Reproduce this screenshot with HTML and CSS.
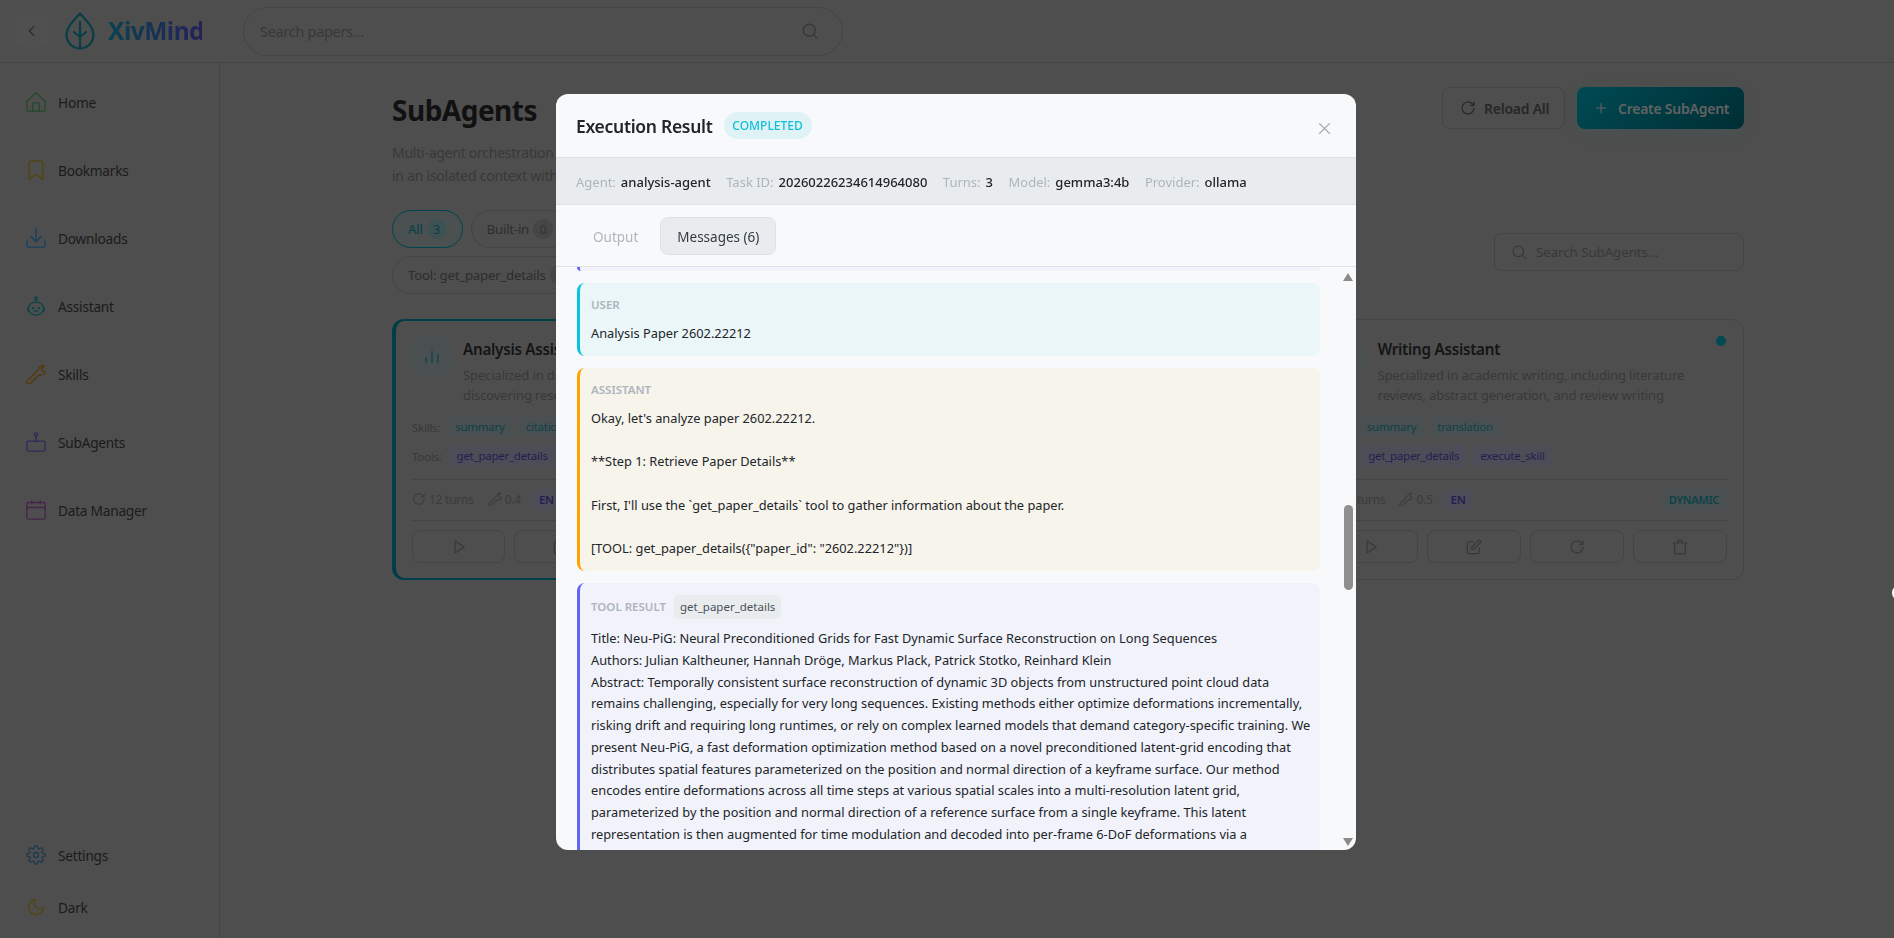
FILE: index.html
```html
<!DOCTYPE html>
<html lang="en">
<head>
<meta charset="utf-8">
<title>XivMind - SubAgents</title>
<link rel="stylesheet" href="styles.css">
</head>
<body>
<div class="app">
  <header class="topbar">
    <button class="back" aria-label="Back"><svg viewBox="0 0 24 24" class="ico-16"><path d="M15 5l-7 7 7 7"/></svg></button>
    <svg class="leaf" viewBox="0 0 30 38"><path d="M15 1.5C8 9 1.6 15.500 1.600 23a13.400 13.400 0 0 0 26.800 0C28.400 15.500 22 9 15 1.500z"/><path d="M15 36V10M15 25l-6-5M15 25l6-5"/></svg>
    <span class="brand">XivMind</span>
    <div class="topsearch">
      <input class="topsearch-input" placeholder="Search papers...">
      <svg viewBox="0 0 24 24" class="ico-18 search-ico"><circle cx="11" cy="11" r="8"/><path d="M17 17l4.500 4.500"/></svg>
    </div>
  </header>
  <div class="shell">
    <aside class="sidebar">
      <nav class="nav">
        <a class="nav-item"><svg viewBox="0 0 24 24" class="nav-ico c-green"><path d="M1 11L12 1l11 10v10.500a1.500 1.500 0 0 1-1.500 1.500h-19A1.500 1.500 0 0 1 1 21.500z"/><path d="M8 23v-9a1 1 0 0 1 1-1h6a1 1 0 0 1 1 1v9"/></svg>Home</a>
        <a class="nav-item"><svg viewBox="0 0 24 24" class="nav-ico c-yellow"><path d="M4 3a2 2 0 0 1 2-2h12a2 2 0 0 1 2 2v20l-8-6-8 6z"/></svg>Bookmarks</a>
        <a class="nav-item"><svg viewBox="0 0 24 24" class="nav-ico c-blue"><path d="M12 1v15M5.500 10l6.500 6.500 6.500-6.500M1 15v6a2 2 0 0 0 2 2h18a2 2 0 0 0 2-2v-6"/></svg>Downloads</a>
        <a class="nav-item"><svg viewBox="0 0 24 24" class="nav-ico c-teal"><circle cx="12" cy="3" r="1.800"/><path d="M12 5v3"/><ellipse cx="12" cy="15" rx="9" ry="8"/><path d="M3 13.500a2.500 3 0 0 0 0 5M21 13.500a2.500 3 0 0 1 0 5"/><circle cx="8.500" cy="14.500" r=".8"/><circle cx="15.500" cy="14.500" r=".8"/><path d="M10 18h4"/></svg>Assistant</a>
        <a class="nav-item"><svg viewBox="0 0 24 24" class="nav-ico c-orange"><path d="M15 7a5.500 5.500 0 0 1 7-5l-3.500 3.500 1.500 3 3 1L23 10a5.500 5.500 0 0 1-7 3L5 23.500a2.500 2.500 0 0 1-3.500-3.500L12 10a5.500 5.500 0 0 1 3-3z"/></svg>Skills</a>
        <a class="nav-item"><svg viewBox="0 0 24 24" class="nav-ico c-indigo"><circle cx="12" cy="3" r="2"/><path d="M12 5v6"/><rect x="1" y="11" width="22" height="12" rx="2.500"/></svg>SubAgents</a>
        <a class="nav-item"><svg viewBox="0 0 24 24" class="nav-ico c-purple"><rect x="1" y="3" width="22" height="20" rx="2"/><path d="M1 9h22M7 1v4M17 1v4"/></svg>Data Manager</a>
      </nav>
      <div class="nav-bottom">
        <a class="nav-item nav-item-low"><svg viewBox="0 0 24 24" class="nav-ico c-steel"><circle cx="12" cy="12" r="3"/><path d="M19.400 15a1.700 1.700 0 0 0 .3 1.800l.1.100a2 2 0 1 1-2.900 2.900l-.1-.1a1.700 1.700 0 0 0-2.800 1.200V21a2 2 0 1 1-4 0v-.1a1.700 1.700 0 0 0-2.900-1.100l-.1.100a2 2 0 1 1-2.800-2.900l.1-.1A1.700 1.700 0 0 0 3.100 14H3a2 2 0 1 1 0-4h.1a1.700 1.700 0 0 0 1.100-2.900l-.1-.1A2 2 0 1 1 7 4.200l.1.100a1.700 1.700 0 0 0 1.800.3 1.700 1.700 0 0 0 1-1.500V3a2 2 0 1 1 4 0v.1a1.700 1.700 0 0 0 2.900 1.100l.1-.1A2 2 0 1 1 19.800 7l-.1.100a1.700 1.700 0 0 0 1.200 2.900h.1a2 2 0 1 1 0 4h-.1a1.700 1.700 0 0 0-1.500 1z"/></svg>Settings</a>
        <a class="nav-item nav-item-low"><svg viewBox="0 0 24 24" class="nav-ico c-yellow"><path d="M21 12.800A9 9 0 1 1 11.200 3 7 7 0 0 0 21 12.800z"/></svg>Dark</a>
      </div>
    </aside>
    <main class="main">
      <section class="page">
        <div class="page-head">
          <div>
            <h1 class="page-title">SubAgents</h1>
            <p class="page-sub">Multi-agent orchestration lets each specialist work on a delegated task<br>in an isolated context with its own tools and skills.</p>
          </div>
          <div class="page-actions">
            <button class="btn btn-ghost"><svg viewBox="0 0 24 24" class="ico-16"><path d="M21 12a9 9 0 1 1-2.600-6.400L21 8M21 3v5h-5"/></svg>Reload All</button>
            <button class="btn btn-primary"><svg viewBox="0 0 24 24" class="ico-14"><path d="M12 4v16M4 12h16"/></svg>Create SubAgent</button>
          </div>
        </div>
        <div class="filters">
          <div class="chips">
            <span class="chip chip-on">All <b class="count count-on">3</b></span>
            <span class="chip">Built-in <b class="count">0</b></span>
            <span class="chip">Dynamic <b class="count">3</b></span>
            <span class="chip">Skill: summary <b class="count">2</b></span>
            <span class="chip">Skill: translation <b class="count">1</b></span>
            <span class="chip">Skill: citation <b class="count">1</b></span>
            <span class="chip chip-break">Tool: get_paper_details <b class="count">3</b></span>
          </div>
          <div class="agent-search">
            <svg viewBox="0 0 24 24" class="ico-16"><circle cx="11" cy="11" r="8"/><path d="M17 17l4.500 4.500"/></svg>
            <input class="agent-search-input" placeholder="Search SubAgents...">
          </div>
        </div>
        <div class="cards">
          <article class="card card-active">
            <div class="card-head">
              <div class="card-icon"><svg viewBox="0 0 24 24" class="ico-20"><path d="M5 13v6M12 5v14M19 9v10"/></svg></div>
              <div class="card-text">
                <h3 class="card-title">Analysis Assistant</h3>
                <p class="card-desc">Specialized in deep analysis of papers and<br>discovering research gaps</p>
              </div>
            </div>
            <div class="tag-row tag-row-skill"><span class="tag-label">Skills:</span><span class="tag tag-skill">summary</span><span class="tag tag-skill">citation</span></div>
            <div class="tag-row"><span class="tag-label">Tools:</span><span class="tag tag-tool">get_paper_details</span><span class="tag tag-tool">execute_skill</span></div>
            <div class="card-meta">
              <svg viewBox="0 0 24 24" class="ico-14"><path d="M21 12a9 9 0 1 1-2.600-6.400L21 8M21 3v5h-5"/></svg><span>12 turns</span>
              <svg viewBox="0 0 24 24" class="ico-14 meta-gap"><path d="M15 7a5.500 5.500 0 0 1 7-5l-3.500 3.500 1.500 3 3 1L23 10a5.500 5.500 0 0 1-7 3L5 23.500a2.500 2.500 0 0 1-3.500-3.500L12 10a5.500 5.500 0 0 1 3-3z"/></svg><span>0.4</span>
              <span class="lang">EN</span>
              <span class="kind">DYNAMIC</span>
            </div>
            <div class="card-btns">
              <button class="icon-btn"><svg viewBox="0 0 24 24" class="ico-16"><path d="M6 3l14 9-14 9z"/></svg></button>
              <button class="icon-btn"><svg viewBox="0 0 24 24" class="ico-16"><path d="M11 4H4a2 2 0 0 0-2 2v14a2 2 0 0 0 2 2h14a2 2 0 0 0 2-2v-7"/><path d="M18.500 2.500a2.100 2.100 0 0 1 3 3L12 15l-4 1 1-4z"/></svg></button>
              <button class="icon-btn"><svg viewBox="0 0 24 24" class="ico-16"><path d="M21 12a9 9 0 1 1-2.600-6.400L21 8M21 3v5h-5"/></svg></button>
              <button class="icon-btn"><svg viewBox="0 0 24 24" class="ico-16"><path d="M4 6h16v16H4zM9 6V2h6v4M2 6h20"/></svg></button>
            </div>
          </article>
          <article class="card">
            <div class="card-head">
              <div class="card-icon"><svg viewBox="0 0 24 24" class="ico-20"><circle cx="11" cy="11" r="8"/><path d="M17 17l4.500 4.500"/></svg></div>
              <div class="card-text">
                <h3 class="card-title">Research Assistant</h3>
                <p class="card-desc">Specialized in literature search, paper discovery, and<br>collecting related research</p>
              </div>
            </div>
            <div class="tag-row tag-row-skill"><span class="tag-label">Skills:</span><span class="tag tag-skill">summary</span></div>
            <div class="tag-row"><span class="tag-label">Tools:</span><span class="tag tag-tool">get_paper_details</span></div>
            <div class="card-meta">
              <svg viewBox="0 0 24 24" class="ico-14"><path d="M21 12a9 9 0 1 1-2.600-6.400L21 8M21 3v5h-5"/></svg><span>10 turns</span>
              <span class="lang">EN</span>
              <span class="kind">DYNAMIC</span>
            </div>
            <div class="card-btns">
              <button class="icon-btn"><svg viewBox="0 0 24 24" class="ico-16"><path d="M6 3l14 9-14 9z"/></svg></button>
              <button class="icon-btn"><svg viewBox="0 0 24 24" class="ico-16"><path d="M11 4H4a2 2 0 0 0-2 2v14a2 2 0 0 0 2 2h14a2 2 0 0 0 2-2v-7"/><path d="M18.500 2.500a2.100 2.100 0 0 1 3 3L12 15l-4 1 1-4z"/></svg></button>
              <button class="icon-btn"><svg viewBox="0 0 24 24" class="ico-16"><path d="M21 12a9 9 0 1 1-2.600-6.400L21 8M21 3v5h-5"/></svg></button>
              <button class="icon-btn"><svg viewBox="0 0 24 24" class="ico-16"><path d="M4 6h16v16H4zM9 6V2h6v4M2 6h20"/></svg></button>
            </div>
          </article>
          <article class="card">
            <span class="status-dot"></span>
            <div class="card-head">
              <div class="card-icon"><svg viewBox="0 0 24 24" class="ico-20"><path d="M11 4H4a2 2 0 0 0-2 2v14a2 2 0 0 0 2 2h14a2 2 0 0 0 2-2v-7"/></svg></div>
              <div class="card-text">
                <h3 class="card-title">Writing Assistant</h3>
                <p class="card-desc">Specialized in academic writing, including literature<br>reviews, abstract generation, and review writing</p>
              </div>
            </div>
            <div class="tag-row tag-row-skill"><span class="tag-label">Skills:</span><span class="tag tag-skill">summary</span><span class="tag tag-skill">translation</span></div>
            <div class="tag-row"><span class="tag-label">Tools:</span><span class="tag tag-tool">get_paper_details</span><span class="tag tag-tool">execute_skill</span></div>
            <div class="card-meta">
              <svg viewBox="0 0 24 24" class="ico-14"><path d="M21 12a9 9 0 1 1-2.600-6.400L21 8M21 3v5h-5"/></svg><span>15 turns</span>
              <svg viewBox="0 0 24 24" class="ico-14 meta-gap"><path d="M15 7a5.500 5.500 0 0 1 7-5l-3.500 3.500 1.500 3 3 1L23 10a5.500 5.500 0 0 1-7 3L5 23.500a2.500 2.500 0 0 1-3.500-3.500L12 10a5.500 5.500 0 0 1 3-3z"/></svg><span>0.5</span>
              <span class="lang">EN</span>
              <span class="kind">DYNAMIC</span>
            </div>
            <div class="card-btns">
              <button class="icon-btn"><svg viewBox="0 0 24 24" class="ico-16"><path d="M6 3l14 9-14 9z"/></svg></button>
              <button class="icon-btn"><svg viewBox="0 0 24 24" class="ico-16"><path d="M11 4H4a2 2 0 0 0-2 2v14a2 2 0 0 0 2 2h14a2 2 0 0 0 2-2v-7"/><path d="M18.500 2.500a2.100 2.100 0 0 1 3 3L12 15l-4 1 1-4z"/></svg></button>
              <button class="icon-btn"><svg viewBox="0 0 24 24" class="ico-16"><path d="M21 12a9 9 0 1 1-2.600-6.400L21 8M21 3v5h-5"/></svg></button>
              <button class="icon-btn"><svg viewBox="0 0 24 24" class="ico-16"><path d="M4 6h16v16H4zM9 6V2h6v4M2 6h20"/></svg></button>
            </div>
          </article>
        </div>
      </section>
    </main>
  </div>
</div>

<div class="overlay">
  <div class="modal">
    <div class="modal-head">
      <h2 class="modal-title">Execution Result</h2>
      <span class="badge">COMPLETED</span>
      <svg viewBox="0 0 24 24" class="modal-close"><path d="M5 5l14 14M19 5L5 19"/></svg>
    </div>
    <div class="modal-meta">
      <span class="meta-item"><i class="meta-label">Agent:</i><b class="meta-value">analysis-agent</b></span>
      <span class="meta-item"><i class="meta-label">Task ID:</i><b class="meta-value">20260226234614964080</b></span>
      <span class="meta-item"><i class="meta-label">Turns:</i><b class="meta-value">3</b></span>
      <span class="meta-item"><i class="meta-label">Model:</i><b class="meta-value">gemma3:4b</b></span>
      <span class="meta-item"><i class="meta-label">Provider:</i><b class="meta-value">ollama</b></span>
    </div>
    <div class="modal-tabs">
      <span class="tab">Output</span>
      <span class="tab tab-on">Messages (6)</span>
    </div>
    <div class="modal-body">
      <div class="messages">
        <div class="msg-tail"></div>
        <div class="msg msg-user">
          <div class="msg-role msg-role-plain">USER</div>
          <div class="msg-text">Analysis Paper 2602.22212</div>
        </div>
        <div class="msg msg-assistant">
          <div class="msg-role msg-role-plain">ASSISTANT</div>
          <div class="msg-text">Okay, let's analyze paper 2602.22212.

**Step 1: Retrieve Paper Details**

First, I'll use the `get_paper_details` tool to gather information about the paper.

[TOOL: get_paper_details({"paper_id": "2602.22212"})]</div>
        </div>
        <div class="msg msg-tool">
          <div class="msg-role msg-role-tool">TOOL RESULT <span class="msg-tool-name">get_paper_details</span></div>
          <div class="msg-text">Title: Neu-PiG: Neural Preconditioned Grids for Fast Dynamic Surface Reconstruction on Long Sequences
Authors: Julian Kaltheuner, Hannah Dröge, Markus Plack, Patrick Stotko, Reinhard Klein
Abstract: Temporally consistent surface reconstruction of dynamic 3D objects from unstructured point cloud data
remains challenging, especially for very long sequences. Existing methods either optimize deformations incrementally,
risking drift and requiring long runtimes, or rely on complex learned models that demand category-specific training. We
present Neu-PiG, a fast deformation optimization method based on a novel preconditioned latent-grid encoding that
distributes spatial features parameterized on the position and normal direction of a keyframe surface. Our method
encodes entire deformations across all time steps at various spatial scales into a multi-resolution latent grid,
parameterized by the position and normal direction of a reference surface from a single keyframe. This latent
representation is then augmented for time modulation and decoded into per-frame 6-DoF deformations via a</div>
        </div>
      </div>
      <div class="scrollbar">
        <svg viewBox="0 0 10 8" class="scroll-arrow"><path d="M5 0l5 8H0z"/></svg>
        <div class="scroll-thumb"></div>
        <svg viewBox="0 0 10 8" class="scroll-arrow scroll-arrow-down"><path d="M0 0h10L5 8z"/></svg>
      </div>
    </div>
  </div>
</div>
<div class="edge-blob"></div>
</body>
</html>
```
FILE: styles.css
```css
* { box-sizing: border-box; }
html, body { margin: 0; height: 100%; overflow: hidden; }
body {
  background: #4e4e4e;
  color: #1b1b1b;
  font-family: "Noto Sans", "Open Sans", "Liberation Sans", sans-serif;
  letter-spacing: -0.25px;
}
svg { fill: none; stroke: currentColor; stroke-width: 1.8; stroke-linecap: round; stroke-linejoin: round; flex: none; }
button, input { font: inherit; letter-spacing: inherit; }
.ico-14 { width: 14px; height: 14px; }
.ico-16 { width: 16px; height: 16px; }
.ico-18 { width: 18px; height: 18px; }
.ico-20 { width: 20px; height: 20px; }

.app { height: 938px; display: flex; flex-direction: column; }
.topbar { height: 63px; flex: none; display: flex; align-items: center; border-bottom: 1px solid #444; padding-left: 16px; }
.back { width: 32px; height: 31px; border: 0; border-radius: 6px; background: #505050; color: #2c2c2c; display: flex; align-items: center; justify-content: center; padding: 0; }
.leaf { width: 30px; height: 38px; margin-left: 17px; color: #063f46; stroke-width: 2.2; }
.brand { margin-left: 13px; width: 94px; font-size: 24.5px; line-height: 36px; font-weight: 700; letter-spacing: -0.5px; white-space: nowrap; background: linear-gradient(90deg, #08424e, #25215a); -webkit-background-clip: text; background-clip: text; color: transparent; }
.topsearch { margin-left: 41px; width: 600px; height: 49px; border: 1px solid #444; border-radius: 25px; display: flex; align-items: center; padding: 0 23px 0 14px; }
.topsearch-input { flex: 1; min-width: 0; border: 0; outline: 0; background: transparent; font-size: 14.4px; color: #383838; }
.topsearch-input::placeholder { color: #383838; opacity: 1; }
.search-ico { color: #383838; }

.shell { flex: 1; display: flex; min-height: 0; }
.sidebar { width: 220px; flex: none; border-right: 1px solid #444; display: flex; flex-direction: column; justify-content: space-between; padding: 5px 0; }
.nav-item { height: 68px; display: flex; align-items: center; padding-left: 26px; gap: 12px; font-size: 13.7px; color: #1b1b1b; }
.nav-item-low { height: 52px; }
.nav-ico { width: 20px; height: 20px; stroke-width: 1.6; }
.c-green { color: #234a2c; }
.c-yellow { color: #524508; }
.c-blue { color: #16425e; }
.c-teal { color: #0e444a; }
.c-orange { color: #58380a; }
.c-indigo { color: #2b2b5c; }
.c-purple { color: #482448; }
.c-steel { color: #1c3a4e; }

.main { flex: 1; min-width: 0; padding: 24px 0 0 172px; }
.page { width: 1352px; }
.page-head { display: flex; justify-content: space-between; align-items: flex-start; margin-bottom: 23px; }
.page-title { margin: 0 0 8px; font-size: 28px; line-height: 46px; font-weight: 700; color: #111; letter-spacing: -0.5px; }
.page-sub { margin: 0; font-size: 14px; line-height: 23px; color: #393939; }
.page-actions { display: flex; gap: 12px; }
.btn { height: 42px; border-radius: 8px; display: flex; align-items: center; font-size: 14px; font-weight: 600; }
.btn-ghost { width: 123px; border: 1px solid #444; background: transparent; color: #272727; padding: 0 0 0 17px; gap: 8px; }
.btn-primary { width: 167px; border: 0; background: linear-gradient(135deg, #004a53, #002e34); color: #626262; padding: 0 0 0 17px; gap: 10px; box-shadow: 0 4px 12px #495253; }
.filters { display: flex; justify-content: space-between; align-items: center; margin-bottom: 25px; }
.chips { width: 900px; display: flex; flex-wrap: wrap; gap: 8px; }
.chip { height: 38px; border: 1px solid #444; border-radius: 19px; display: inline-flex; align-items: center; gap: 4px; padding: 0 15px; font-size: 13.3px; color: #2d2d2d; }
.chip-on { border-color: #00454d; background: #4b5051; color: #033f48; }
.count { min-width: 20px; height: 20px; border-radius: 10px; background: #464646; display: inline-flex; align-items: center; justify-content: center; font-size: 12px; font-weight: 400; color: #333; }
.count-on { background: #3e5153; color: #033f48; }
.chip-break { margin-right: 400px; }
.agent-search { width: 250px; height: 38px; border: 1px solid #444; border-radius: 8px; display: flex; align-items: center; gap: 7px; padding: 0 16px; color: #383838; }
.agent-search-input { flex: 1; min-width: 0; border: 0; outline: 0; background: transparent; font-size: 13.2px; letter-spacing: 0; }
.agent-search-input::placeholder { color: #383838; opacity: 1; }

.cards { display: grid; grid-template-columns: repeat(3, 1fr); gap: 20px; }
.card { position: relative; height: 261px; border: 1px solid #444; border-radius: 12px; padding: 17px 16px 16px; }
.card-active { border: 2px solid #003f47; border-left-width: 4px; padding-top: 16px; }
.status-dot { position: absolute; top: 16px; right: 17px; width: 10px; height: 10px; border-radius: 50%; background: #004a54; }
.card-head { display: flex; gap: 14px; height: 68px; margin-bottom: 12px; }
.card-active .card-head { gap: 11px; }
.card-icon { width: 40px; height: 40px; flex: none; border-radius: 10px; background: #4a5051; color: #14474c; display: flex; align-items: center; justify-content: center; }
.card-title { margin: 0 0 4px; font-size: 15.2px; line-height: 24px; font-weight: 600; color: #141414; }
.card-desc { margin: 0; font-size: 13px; line-height: 20px; color: #393939; letter-spacing: -0.12px; }
.tag-row { height: 22px; display: flex; align-items: center; gap: 5px; margin-bottom: 12px; font-size: 11.5px; }
.tag-row-skill { height: 20px; margin-bottom: 8px; }
.tag-label { color: #383838; margin-right: 2px; }
.tag { border-radius: 5px; padding: 0 8px; line-height: 20px; }
.tag-skill { background: #4a5051; color: #0a4248; }
.tag-tool { background: #4d4d57; color: #211f50; line-height: 22px; }
.card-meta { border-top: 1px solid #444; border-bottom: 1px solid #444; height: 42px; padding-bottom: 2px; display: flex; align-items: center; gap: 3px; font-size: 12px; color: #3c3c3c; margin-bottom: 9px; }
.meta-gap { margin-left: 11px; }
.lang { margin-left: 8px; background: #4d4d57; color: #211f50; border-radius: 5px; padding: 0 7px; font-size: 11.5px; line-height: 21px; font-weight: 600; }
.kind { margin-left: auto; background: #4a5051; color: #0a4248; border-radius: 5px; padding: 0 8px; font-size: 11px; line-height: 21px; font-weight: 600; }
.card-btns { display: grid; grid-template-columns: repeat(4, 1fr); gap: 9px; }
.icon-btn { height: 33px; border: 1px solid #444; border-radius: 8px; background: transparent; color: #383838; display: flex; align-items: center; justify-content: center; padding: 0; }

.overlay { position: fixed; inset: 0; backdrop-filter: blur(0.5px); }
.modal { position: absolute; left: 556px; top: 94px; width: 800px; height: 756px; background: #f8f9fb; border-radius: 12px; overflow: hidden; display: flex; flex-direction: column; letter-spacing: 0; }
.modal-head { height: 64px; flex: none; display: flex; align-items: center; gap: 11px; padding: 0 24px 0 20px; border-bottom: 1px solid #dee2e6; }
.modal-title { margin: 0; font-size: 17.5px; font-weight: 600; color: #212529; letter-spacing: -0.3px; }
.badge { height: 27px; width: 88px; border-radius: 13.5px; background: #dff3f7; color: #12bfd6; font-size: 12px; display: flex; align-items: center; justify-content: center; font-weight: 500; }
.modal-close { margin: 6px -1px 0 auto; width: 17px; height: 17px; color: #9aa3ab; stroke-width: 1.6; }
.modal-meta { height: 47px; flex: none; background: #e9ecef; border-bottom: 1px solid #dee2e6; display: flex; align-items: center; gap: 15.5px; padding: 2px 0 0 20px; font-size: 13px; }
.meta-item { display: inline-flex; gap: 5px; }
.meta-label { font-style: normal; color: #adb5bd; }
.meta-value { font-weight: 500; color: #212529; }
.modal-tabs { height: 62px; flex: none; display: flex; align-items: center; gap: 5px; padding: 0 0 0 20px; border-bottom: 1px solid #dee2e6; font-size: 13.5px; }
.tab { height: 38px; display: flex; align-items: center; padding: 2px 16px 0; color: #adb5bd; border-radius: 8px; border: 1px solid transparent; }
.tab-on { background: #e9ecef; border-color: #dee2e6; color: #343a40; }
.modal-body { flex: 1; min-height: 0; display: flex; overflow: hidden; }
.messages { flex: 1; min-width: 0; padding-left: 21px; padding-right: 20px; display: flex; flex-direction: column; gap: 12px; overflow: hidden; }
.msg-tail { height: 4px; flex: none; background: #f1f2fa; border-left: 3px solid #6366f1; border-radius: 0 0 8px 8px; }
.msg { flex: none; border-left: 3px solid; border-radius: 8px; padding: 12px 12px 11px 11px; font-size: 12.8px; }
.msg-user { background: #ebf6f8; border-color: #06c4dc; }
.msg-assistant { background: #f7f4ec; border-color: #ffa300; }
.msg-tool { background: #f1f2fa; border-color: #6366f1; }
.msg-role { color: #adb5bd; font-size: 11.5px; font-weight: 600; }
.msg-role-plain { line-height: 20px; margin-bottom: 8px; }
.msg-role-tool { height: 24px; line-height: 24px; margin-bottom: 9px; display: flex; gap: 8px; }
.msg-tool-name { background: #e9ecef; color: #495057; border-radius: 5px; padding: 0 6px; font-weight: 400; }
.msg-text { white-space: pre; line-height: 1.7; color: #212529; }
.scrollbar { width: 16px; flex: none; display: flex; flex-direction: column; align-items: center; padding: 6px 0 4px; }
.scroll-arrow { width: 10px; height: 8px; fill: #8a8a8a; stroke: none; }
.scroll-thumb { width: 9px; height: 85px; margin-top: 224px; border-radius: 5px; background: #8f8f8f; }
.scroll-arrow-down { margin-top: auto; }
.edge-blob { position: fixed; left: 1892px; top: 585px; width: 16px; height: 16px; border-radius: 50%; background: #fff; }
```
